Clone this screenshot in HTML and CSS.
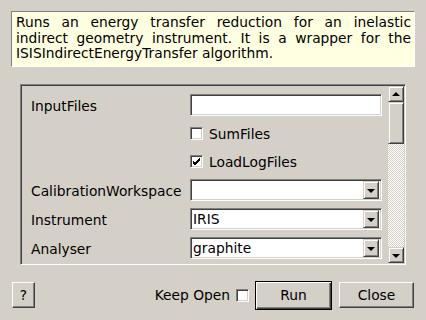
FILE: index.html
```html
<!DOCTYPE html>
<html>
<head>
    <meta charset="UTF-8">
    <title>ISISIndirectEnergyTransfer</title>
    <link rel="stylesheet" href="styles.css">
</head>
<body>
<div class="dialog">
    <div class="desc">Runs an energy transfer reduction for an inelastic indirect geometry instrument. It is a wrapper for the ISISIndirectEnergyTransfer algorithm.</div>

    <div class="frame">
        <div class="props">
            <label class="name">InputFiles</label>
            <div class="field text"></div>

            <span></span>
            <div class="check-row"><span class="check"></span>SumFiles</div>

            <span></span>
            <div class="check-row"><span class="check">
                <svg width="9" height="9" viewBox="0 0 9 9"><path d="M1 4 L3 6 L8 1 M1 5 L3 7 L8 2 M1 6 L3 8 L8 3" stroke="#000" stroke-width="1" fill="none"/></svg>
            </span>LoadLogFiles</div>

            <label class="name">CalibrationWorkspace</label>
            <div class="field combo"><span class="value"></span><span class="arrow"><i></i></span></div>

            <label class="name">Instrument</label>
            <div class="field combo"><span class="value">IRIS</span><span class="arrow"><i></i></span></div>

            <label class="name">Analyser</label>
            <div class="field combo"><span class="value">graphite</span><span class="arrow"><i></i></span></div>
        </div>
        <div class="scrollbar">
            <div class="sb-btn"><i class="up"></i></div>
            <div class="thumb"></div>
            <div class="track"></div>
            <div class="sb-btn"><i></i></div>
        </div>
    </div>

    <div class="buttons">
        <button class="btn help">?</button>
        <span class="spacer"></span>
        <span class="keep">Keep Open</span>
        <span class="check small"></span>
        <button class="btn run">Run</button>
        <button class="btn close">Close</button>
    </div>
</div>
</body>
</html>
```

FILE: styles.css
```css
body {
    margin: 0;
    background: #d4d0c8;
    font-family: "DejaVu Sans", sans-serif;
    font-size: 13.8px;
    color: #000;
}

.dialog {
    width: 426px;
    height: 320px;
    padding-top: 11px;
    box-sizing: border-box;
}

.desc {
    margin: 0 11px;
    height: 56px;
    box-sizing: border-box;
    padding: 3px 3px 0 4px;
    background: #ffffe1;
    border: 1px solid;
    border-color: #808080 #fff #fff #808080;
    line-height: 15.5px;
    text-align: justify;
}

.frame {
    margin: 17px 0 0 20px;
    width: 386px;
    height: 181px;
    box-sizing: border-box;
    display: flex;
    border: 1px solid;
    border-color: #808080 #fff #fff #808080;
    box-shadow: inset 1px 1px #404040, inset -1px -1px #d4d0c8;
    padding: 1px;
}

.props {
    flex: 1;
    display: grid;
    grid-template-columns: 159px 192px;
    grid-template-rows: 22px 21px 21px 22px 22px 22px;
    row-gap: 7px;
    align-items: center;
    padding: 8px 0 0 9px;
}

.name {
    line-height: 22px;
    padding-top: 1px;
}

.field {
    height: 22px;
    box-sizing: border-box;
    background: #fff;
    border: 1px solid;
    border-color: #808080 #fff #fff #808080;
    box-shadow: inset 1px 1px #404040, inset -1px -1px #d4d0c8;
}

.combo {
    display: flex;
    align-items: center;
    padding: 2px;
}

.combo .value {
    flex: 1;
    padding-left: 0;
}

.arrow {
    width: 16px;
    height: 18px;
    box-sizing: border-box;
    background: #d4d0c8;
    border: 1px solid;
    border-color: #d4d0c8 #404040 #404040 #d4d0c8;
    box-shadow: inset 1px 1px #fff, inset -1px -1px #808080;
    display: flex;
    align-items: center;
    justify-content: center;
}

.arrow i,
.sb-btn i {
    width: 0;
    height: 0;
    border-left: 4px solid transparent;
    border-right: 4px solid transparent;
    border-top: 4px solid #000;
    margin-top: 1px;
}

.sb-btn i.up {
    border-top: 0;
    border-bottom: 4px solid #000;
    margin-top: -1px;
}

.check-row {
    display: flex;
    align-items: center;
    gap: 6px;
}

.check {
    width: 13px;
    height: 13px;
    box-sizing: border-box;
    background: #fff;
    border: 1px solid;
    border-color: #808080 #fff #fff #808080;
    box-shadow: inset 1px 1px #404040, inset -1px -1px #d4d0c8;
    display: flex;
    align-items: center;
    justify-content: center;
}

.scrollbar {
    width: 16px;
    display: flex;
    flex-direction: column;
}

.sb-btn {
    height: 16px;
    box-sizing: border-box;
    background: #d4d0c8;
    border: 1px solid;
    border-color: #d4d0c8 #404040 #404040 #d4d0c8;
    box-shadow: inset 1px 1px #fff, inset -1px -1px #808080;
    display: flex;
    align-items: center;
    justify-content: center;
}

.thumb {
    height: 42px;
    box-sizing: border-box;
    background: #d4d0c8;
    border: 1px solid;
    border-color: #d4d0c8 #404040 #404040 #d4d0c8;
    box-shadow: inset 1px 1px #fff, inset -1px -1px #808080;
}

.track {
    flex: 1;
    background: repeating-conic-gradient(#fff 0 25%, #d4d0c8 0 50%) 0 0 / 2px 2px;
}

.buttons {
    display: flex;
    align-items: center;
    margin: 16px 12px 0 12px;
    height: 28px;
}

.spacer {
    flex: 1;
}

.btn {
    font-family: "DejaVu Sans", sans-serif;
    font-size: 13.8px;
    color: #000;
    background: #d4d0c8;
    height: 26px;
    box-sizing: border-box;
    border: 1px solid;
    border-color: #fff #404040 #404040 #fff;
    box-shadow: inset -1px -1px #808080;
    padding: 0;
}

.help {
    width: 23px;
}

.keep {
    margin-right: 6px;
}

.check.small {
    margin-right: 6px;
}

.run {
    width: 77px;
    height: 29px;
    border: 1px solid #000;
    box-shadow: inset 1px 1px #fff, inset -1px -1px #404040, inset -2px -2px #808080;
    margin-right: 7px;
}

.close {
    width: 75px;
}
```
